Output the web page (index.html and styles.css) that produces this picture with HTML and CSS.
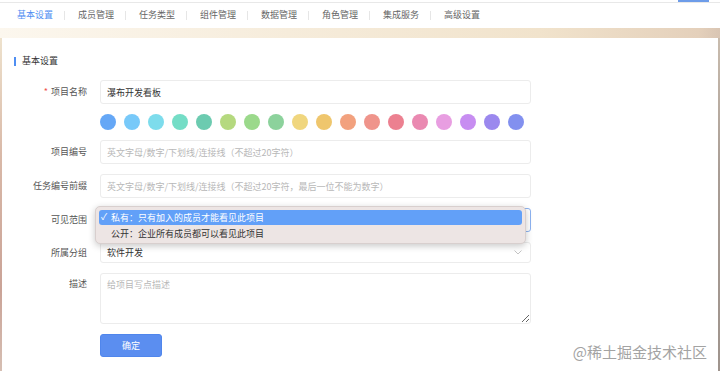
FILE: index.html
```html
<!DOCTYPE html>
<html lang="zh-CN">
<head>
    <meta charset="UTF-8">
    <meta name="viewport" content="width=device-width, initial-scale=1.0">
    <title>项目设置</title>
    <link rel="stylesheet" href="styles.css">
</head>
<body>
    <div class="topbar">
        <span class="topbar-mark"></span>
        <nav class="tabs">
            <a class="tab active">基本设置</a>
            <a class="tab">成员管理</a>
            <a class="tab">任务类型</a>
            <a class="tab">组件管理</a>
            <a class="tab">数据管理</a>
            <a class="tab">角色管理</a>
            <a class="tab">集成服务</a>
            <a class="tab">高级设置</a>
        </nav>
    </div>
    <div class="band"></div>

    <div class="main">
        <div class="edge-left"></div>
        <div class="panel">
            <h2 class="section-title">基本设置</h2>

            <div class="form">
                <label class="label required">项目名称</label>
                <input class="field" type="text" value="瀑布开发看板">

                <span></span>
                <div class="colors">
                    <span class="dot"></span><span class="dot"></span><span class="dot"></span>
                    <span class="dot"></span><span class="dot"></span><span class="dot"></span>
                    <span class="dot"></span><span class="dot"></span><span class="dot"></span>
                    <span class="dot"></span><span class="dot"></span><span class="dot"></span>
                    <span class="dot"></span><span class="dot"></span><span class="dot"></span>
                    <span class="dot"></span><span class="dot"></span><span class="dot"></span>
                </div>

                <label class="label">项目编号</label>
                <input class="field" type="text" placeholder="英文字母/数字/下划线/连接线（不超过20字符）">

                <label class="label">任务编号前缀</label>
                <input class="field" type="text" placeholder="英文字母/数字/下划线/连接线（不超过20字符，最后一位不能为数字）">

                <label class="label">可见范围</label>
                <div class="select-wrap">
                    <div class="select focused"></div>
                    <!-- native dropdown opened over the select -->
                    <div class="popup">
                        <div class="option selected"><span class="check">✓</span>私有：只有加入的成员才能看见此项目</div>
                        <div class="option">公开：企业所有成员都可以看见此项目</div>
                    </div>
                </div>

                <label class="label">所属分组</label>
                <div class="select small">
                    <span>软件开发</span>
                    <svg class="chevron" width="8" height="5" viewBox="0 0 8 5"><polyline points="0.5,0.5 4,4 7.5,0.5" fill="none" stroke="#c4c4c4" stroke-width="1"/></svg>
                </div>

                <label class="label label-top">描述</label>
                <textarea class="field area" placeholder="给项目写点描述"></textarea>

                <span></span>
                <div><button class="btn" type="button">确定</button></div>
            </div>

            <div class="watermark">@稀土掘金技术社区</div>
        </div>
        <div class="edge-right"></div>
    </div>
</body>
</html>
```

FILE: styles.css
```css
html, body { margin: 0; padding: 0; height: 100%; overflow: hidden; }
body { font-family: "Noto Sans CJK SC", "Noto Sans", sans-serif; font-size: 9px; color: #333; background-color: #fff; }

.topbar { position: relative; height: 25px; border-top: 1px solid #e8e8e8; margin-top: 2px; background-color: #fff; }
.topbar-mark { position: absolute; top: -3px; left: 678px; width: 31px; height: 2px; background-color: #6d9ce9; }
.tabs { display: flex; align-items: center; height: 23px; padding-left: 4px; }
.tab { position: relative; padding: 0 12px 0 13px; line-height: 12px; color: #666; white-space: nowrap; cursor: pointer; }
.tab::after { content: ""; position: absolute; right: 0; top: 2px; width: 1px; height: 9px; background-color: #e6e6e6; }
.tab:last-child::after { display: none; }
.tab.active { color: #4f8ef2; }

.band { height: 10px; background: linear-gradient(to right, #fcf7ee, #f6ecdb 40%, #f1e3cc 75%, #e4d0bb 97%, #d9c5b3); }

.main { display: flex; height: calc(100vh - 37px); }
.edge-left { width: 2px; background: linear-gradient(#eee2cd, #d9b9a8 35%, #caa397 75%, #d6bfb3); }
.edge-right { width: 2px; background: linear-gradient(#c9bcae, #a99d95 40%, #9f948d); }
.panel { position: relative; flex: 1; background-color: #fff; padding-top: 17px; }

.section-title { display: flex; align-items: center; margin: 0 0 0 12px; font-size: 9px; font-weight: normal; line-height: 12px; color: #333; }
.section-title::before { content: ""; width: 2px; height: 9px; margin-right: 6px; background-color: #4f8ef2; }

.form { display: grid; grid-template-columns: 85px 431px; column-gap: 13px; row-gap: 10px; margin-top: 13px; }
.label { display: flex; align-items: center; justify-content: flex-end; color: #555; line-height: 12px; white-space: nowrap; }
.label.required::before { content: "*"; color: #f0534e; margin-right: 3px; font-size: 9px; }
.label-top { align-items: flex-start; padding-top: 5px; }

.field { box-sizing: border-box; height: 24px; margin: 0; padding: 0 6px; border: 1px solid #ececec; border-radius: 3px; font-family: inherit; font-size: 9px; color: #333; background-color: #fff; outline: none; }
.field::placeholder { color: #b8b8b8; }
.area { display: block; height: 51px; padding: 5px 6px; line-height: 12px; resize: vertical; }

.colors { display: flex; gap: 8px; height: 16px; }
.dot { width: 16px; height: 16px; border-radius: 50%; }
.dot:nth-child(1) { background-color: #65a7f6; }
.dot:nth-child(2) { background-color: #78c9f9; }
.dot:nth-child(3) { background-color: #7ddcec; }
.dot:nth-child(4) { background-color: #74ddc6; }
.dot:nth-child(5) { background-color: #6ccbb0; }
.dot:nth-child(6) { background-color: #b5d97f; }
.dot:nth-child(7) { background-color: #9bd98b; }
.dot:nth-child(8) { background-color: #8cd29c; }
.dot:nth-child(9) { background-color: #f0d67e; }
.dot:nth-child(10) { background-color: #efc66d; }
.dot:nth-child(11) { background-color: #f2a17e; }
.dot:nth-child(12) { background-color: #ef948b; }
.dot:nth-child(13) { background-color: #ec8090; }
.dot:nth-child(14) { background-color: #ea89b1; }
.dot:nth-child(15) { background-color: #e89ee1; }
.dot:nth-child(16) { background-color: #c78df1; }
.dot:nth-child(17) { background-color: #9b88ee; }
.dot:nth-child(18) { background-color: #8290ef; }

.select-wrap { position: relative; height: 24px; }
.select { box-sizing: border-box; display: flex; align-items: center; justify-content: space-between; height: 24px; padding: 0 6px; border: 1px solid #ececec; border-radius: 3px; line-height: 12px; color: #333; background-color: #fff; }
.select.focused { border-color: #8db3f1; }
.select.small { height: 21px; padding-right: 8px; }
.chevron { display: block; }

.popup { position: absolute; left: -5px; top: -2px; box-sizing: border-box; width: 431px; height: 38px; padding: 3px 3px; background-color: #ede5e4; border: 1px solid #d8cfce; border-radius: 5px; box-shadow: 0 2px 7px rgba(0, 0, 0, 0.22); }
.option { display: flex; align-items: center; height: 15px; padding-left: 12px; line-height: 12px; color: #333; border-radius: 3px; white-space: nowrap; }
.option + .option { margin-top: 1px; height: 16px; }
.option.selected { position: relative; background-color: #62a0f8; color: #fff; }
.check { position: absolute; left: 2px; top: 1px; font-size: 9px; }

.btn { display: block; width: 62px; height: 23px; padding: 0; border: 1px solid #5086ec; border-radius: 3px; font-family: inherit; font-size: 9px; color: #fff; background-color: #5b8ef0; cursor: pointer; }
.btn:hover { background-color: #4a7fe6; }

.watermark { position: absolute; right: 11px; bottom: 10px; font-size: 15px; line-height: 20px; color: #a3a3a3; text-shadow: 0 0 1px #fff; white-space: nowrap; }
```
